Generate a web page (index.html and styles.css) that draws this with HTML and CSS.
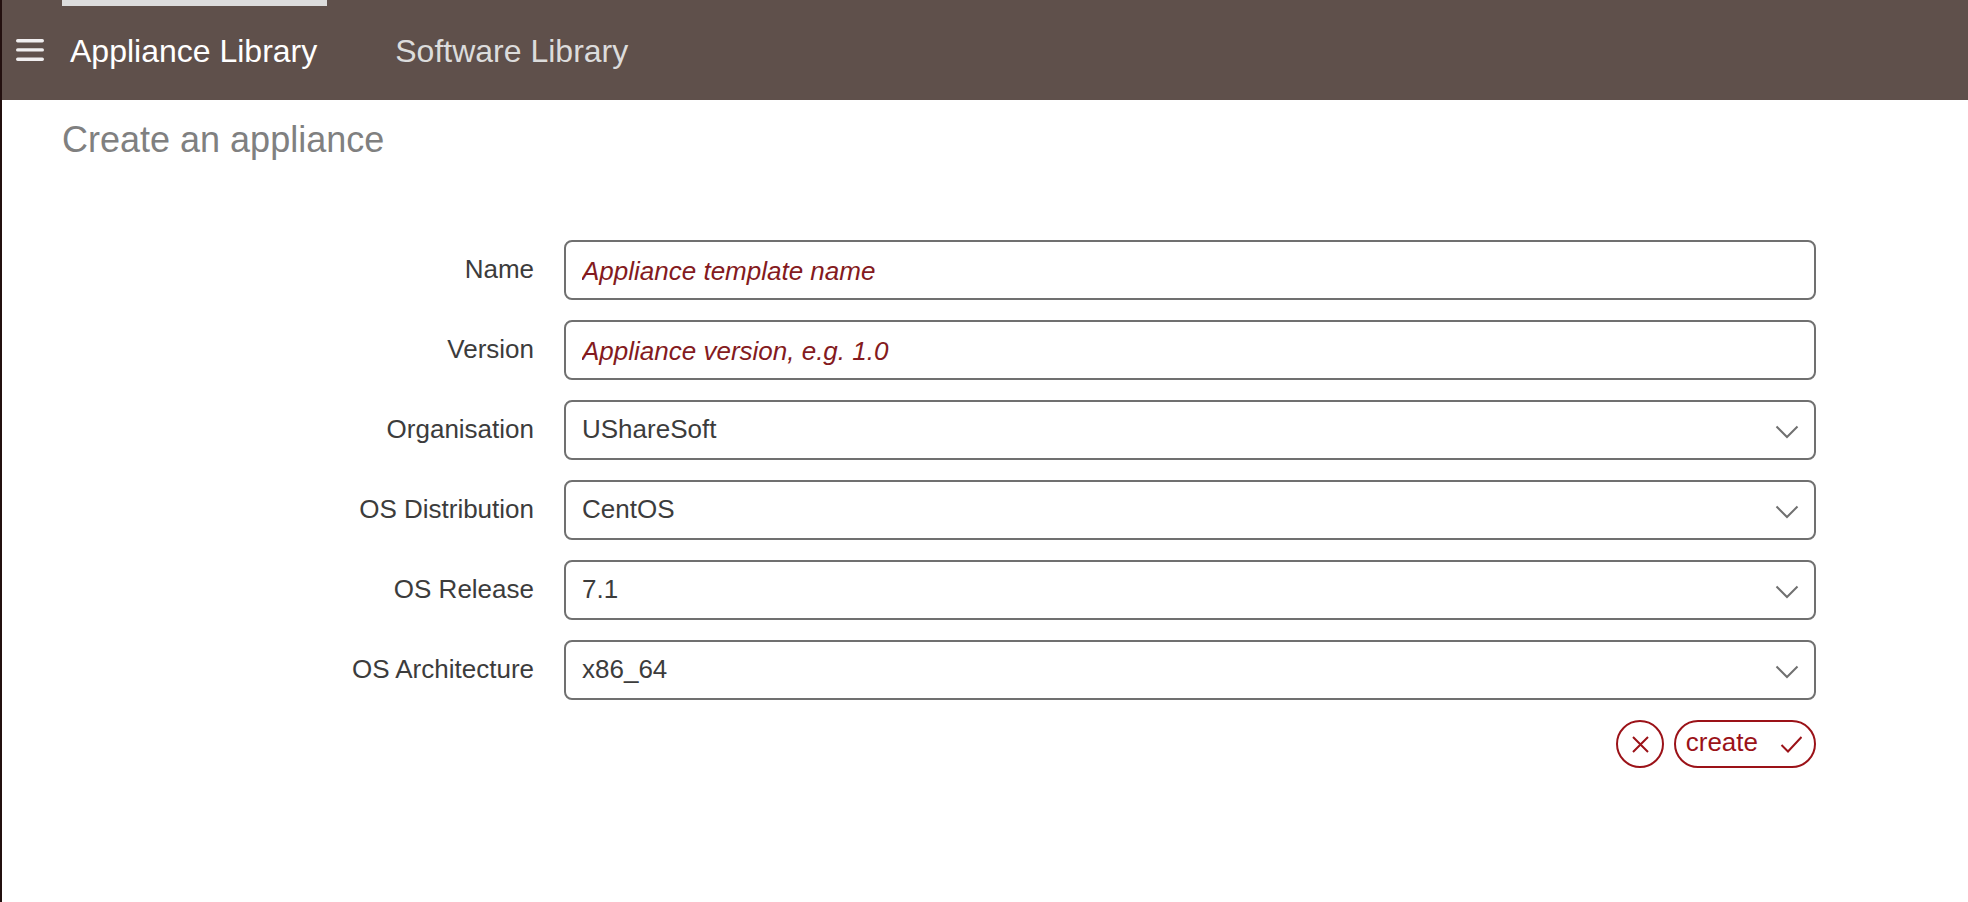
FILE: index.html
```html
<!DOCTYPE html>
<html lang="en">
<head>
<meta charset="utf-8">
<title>Create an appliance</title>
<link rel="stylesheet" href="styles.css">
</head>
<body>
<header class="topbar">
  <button class="menu-button" type="button" aria-label="Menu">
    <svg width="30" height="24" viewBox="0 0 30 24" fill="none" stroke="#f0eeef" stroke-width="3.4" stroke-linecap="round">
      <path d="M2.7 2.8h24.6M2.7 11.9h24.6M2.7 21.3h24.6"/>
    </svg>
  </button>
  <nav class="tabs">
    <a class="tab tab-active" href="#appliances">Appliance Library</a>
    <a class="tab" href="#software">Software Library</a>
  </nav>
</header>
<main class="page">
  <h1 class="title">Create an appliance</h1>
  <form class="form">
    <label class="label" for="name">Name</label>
    <input class="field" id="name" type="text" placeholder="Appliance template name">

    <label class="label" for="version">Version</label>
    <input class="field" id="version" type="text" placeholder="Appliance version, e.g. 1.0">

    <label class="label" for="org">Organisation</label>
    <div class="select-box">
      <select class="field select" id="org"><option>UShareSoft</option></select>
      <svg class="chevron" width="24" height="14" viewBox="0 0 24 14"><path d="M1.5 1.5 12 12 22.5 1.5"/></svg>
    </div>

    <label class="label" for="distribution">OS Distribution</label>
    <div class="select-box">
      <select class="field select" id="distribution"><option>CentOS</option></select>
      <svg class="chevron" width="24" height="14" viewBox="0 0 24 14"><path d="M1.5 1.5 12 12 22.5 1.5"/></svg>
    </div>

    <label class="label" for="release">OS Release</label>
    <div class="select-box">
      <select class="field select" id="release"><option>7.1</option></select>
      <svg class="chevron" width="24" height="14" viewBox="0 0 24 14"><path d="M1.5 1.5 12 12 22.5 1.5"/></svg>
    </div>

    <label class="label" for="architecture">OS Architecture</label>
    <div class="select-box">
      <select class="field select" id="architecture"><option>x86_64</option></select>
      <svg class="chevron" width="24" height="14" viewBox="0 0 24 14"><path d="M1.5 1.5 12 12 22.5 1.5"/></svg>
    </div>

    <div class="actions">
      <button class="action cancel" type="button" aria-label="Cancel">
        <svg width="18" height="18" viewBox="0 0 18 18"><path d="M2 2l15 15M17 2l-15 15"/></svg>
      </button>
      <button class="action create" type="submit">
        <span class="create-text">create</span>
        <svg width="22" height="18" viewBox="0 0 22 18"><path d="M1.5 10 8 16.5 21.5 2"/></svg>
      </button>
    </div>
  </form>
</main>
</body>
</html>
```
FILE: styles.css
```css
* {
  box-sizing: border-box;
}

body {
  margin: 0;
  min-height: 100vh;
  border-left: 2px solid #23100f;
  background: #fff;
  color: #3c3c3c;
  font-family: "Liberation Sans", Arial, sans-serif;
  font-size: 26px;
}

.topbar {
  display: flex;
  height: 100px;
  background: #5f504b;
}

.menu-button {
  display: flex;
  width: 60px;
  padding: 38px 0 0 13px;
  border: 0;
  background: none;
}

.tabs {
  display: flex;
  gap: 60px;
}

.tab {
  padding: 26px 10px 0 8px;
  border-top: 6px solid transparent;
  color: #dcdcdc;
  font-size: 32px;
  line-height: 38px;
  text-decoration: none;
}

.tab-active {
  border-top-color: #dcdcdc;
  color: #fff;
}

.page {
  padding: 18px 152px 40px 60px;
}

.title {
  margin: 0 0 78px;
  color: #808080;
  font-size: 36px;
  font-weight: 400;
  line-height: 44px;
}

.form {
  display: grid;
  grid-template-columns: 118fr 313fr;
  gap: 20px 30px;
}

.label {
  padding-bottom: 2px;
  line-height: 58px;
  text-align: right;
}

.field {
  display: block;
  width: 100%;
  height: 60px;
  padding: 2px 16px 0;
  border: 2px solid #707070;
  border-radius: 8px;
  outline: 0;
  background: #fff;
  color: #3c3c3c;
  font: inherit;
}

.field::placeholder {
  color: #841a20;
  font-style: italic;
  opacity: 1;
}

.select-box {
  position: relative;
}

.select {
  appearance: none;
  padding: 0 56px 2px 16px;
}

.chevron {
  position: absolute;
  top: 25px;
  right: 17px;
  fill: none;
  stroke: #707070;
  stroke-width: 2;
  pointer-events: none;
}

.actions {
  grid-column: 2;
  display: flex;
  justify-content: flex-end;
  gap: 10px;
}

.action {
  display: flex;
  align-items: center;
  height: 48px;
  border: 2px solid #9b1218;
  border-radius: 24px;
  background: #fff;
  color: #9b1218;
  font: inherit;
}

.action svg {
  fill: none;
  stroke: #9b1218;
  stroke-width: 2;
}

.cancel {
  justify-content: center;
  width: 48px;
  padding: 0;
}

.create {
  gap: 22px;
  padding: 0 12px 0 10px;
}

.create-text {
  padding-bottom: 4px;
}
```
